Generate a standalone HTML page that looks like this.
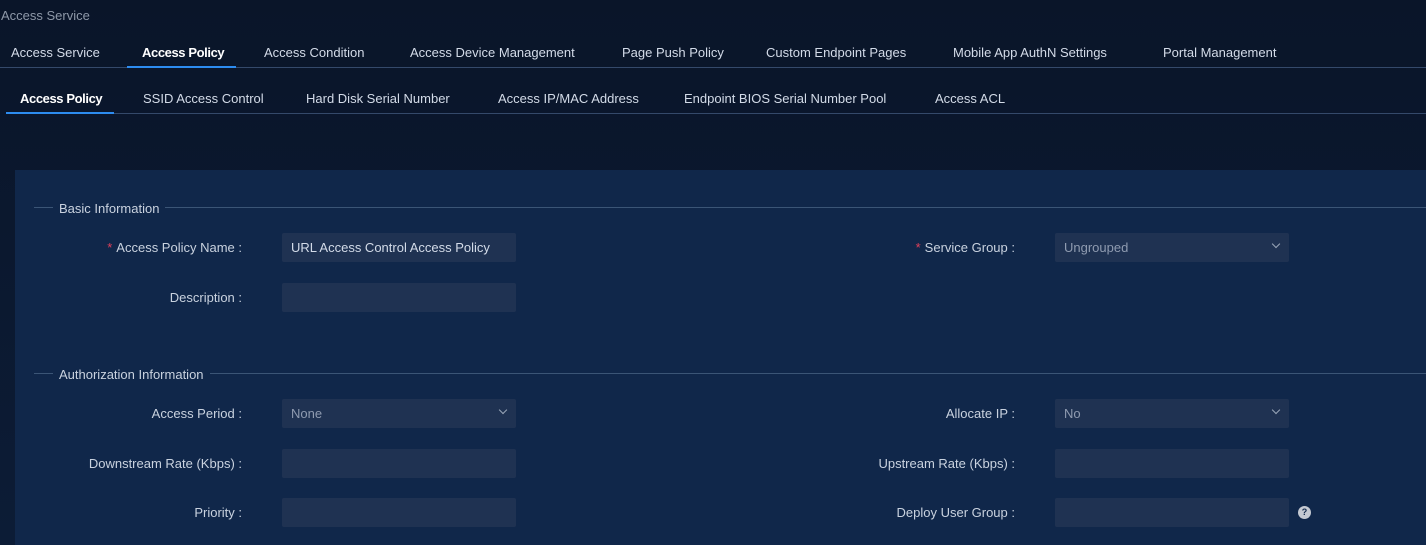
<!DOCTYPE html>
<html><head><style>
body{margin:0;width:1426px;height:545px;overflow:hidden;background:linear-gradient(180deg,#0a1529 0%,#0c1c36 100%);font-family:"Liberation Sans",sans-serif;font-size:13px;color:#d3dbe8;position:relative}
.a{position:absolute;white-space:nowrap}
.t{top:45px}
.s{top:91px}
.panel{position:absolute;left:15px;top:170px;width:1411px;height:375px;background:#10274a}
.in{position:absolute;width:234px;height:29px;background:#1f3252;border-radius:2px;color:#8f9bb0;line-height:29px;padding-left:9px;box-sizing:border-box}
.in.v{color:#d3dbe8}
.lbl{position:absolute;text-align:right;width:240px;color:#c9d2df}
.req{color:#e0405a;margin-right:4px}
.chev{position:absolute;right:10px;top:8px;width:5px;height:5px;border-right:1px solid #9aa6b8;border-bottom:1px solid #9aa6b8;transform:rotate(45deg)}
.sec{position:absolute;left:19px;height:1px;background:#3b5576;width:1392px}
.sect{position:absolute;background:#10274a;padding:0 6px;color:#c9d2df}
</style></head><body>
<div class="a" style="left:1px;top:8px;color:#8e98a8;font-size:13px">Access Service</div>
<div class="a t" style="left:11px">Access Service</div>
<div class="a t" style="left:142px;color:#fff;font-weight:bold;letter-spacing:-0.4px">Access Policy</div>
<div class="a t" style="left:264px">Access Condition</div>
<div class="a t" style="left:410px">Access Device Management</div>
<div class="a t" style="left:622px">Page Push Policy</div>
<div class="a t" style="left:766px">Custom Endpoint Pages</div>
<div class="a t" style="left:953px">Mobile App AuthN Settings</div>
<div class="a t" style="left:1163px">Portal Management</div>
<div class="a" style="left:0;top:67px;width:1426px;height:1px;background:#34496a"></div>
<div class="a" style="left:127px;top:66px;width:109px;height:2px;background:#2d8cf0"></div>
<div class="a s" style="left:20px;color:#fff;font-weight:bold;letter-spacing:-0.4px">Access Policy</div>
<div class="a s" style="left:143px">SSID Access Control</div>
<div class="a s" style="left:306px">Hard Disk Serial Number</div>
<div class="a s" style="left:498px">Access IP/MAC Address</div>
<div class="a s" style="left:684px">Endpoint BIOS Serial Number Pool</div>
<div class="a s" style="left:935px">Access ACL</div>
<div class="a" style="left:6px;top:113px;width:1420px;height:1px;background:#34496a"></div>
<div class="a" style="left:6px;top:112px;width:108px;height:2px;background:#2d8cf0"></div>
<div class="panel"></div>
<div class="sec" style="top:207px;left:34px"></div>
<div class="sect" style="left:53px;top:201px">Basic Information</div>
<div class="sec" style="top:373px;left:34px"></div>
<div class="sect" style="left:53px;top:367px">Authorization Information</div>

<div class="lbl" style="left:2px;top:240px"><span class="req">*</span>Access Policy Name :</div>
<div class="in v" style="left:282px;top:233px">URL Access Control Access Policy</div>
<div class="lbl" style="left:775px;top:240px"><span class="req">*</span>Service Group :</div>
<div class="in" style="left:1055px;top:233px">Ungrouped<span class="chev"></span></div>
<div class="lbl" style="left:2px;top:290px">Description :</div>
<div class="in" style="left:282px;top:283px"></div>

<div class="lbl" style="left:2px;top:406px">Access Period :</div>
<div class="in" style="left:282px;top:399px">None<span class="chev"></span></div>
<div class="lbl" style="left:775px;top:406px">Allocate IP :</div>
<div class="in" style="left:1055px;top:399px">No<span class="chev"></span></div>
<div class="lbl" style="left:2px;top:456px">Downstream Rate (Kbps) :</div>
<div class="in" style="left:282px;top:449px"></div>
<div class="lbl" style="left:775px;top:456px">Upstream Rate (Kbps) :</div>
<div class="in" style="left:1055px;top:449px"></div>
<div class="lbl" style="left:2px;top:505px">Priority :</div>
<div class="in" style="left:282px;top:498px"></div>
<div class="lbl" style="left:775px;top:505px">Deploy User Group :</div>
<div class="in" style="left:1055px;top:498px"></div>
<div class="a" style="left:1298px;top:506px;width:13px;height:13px;border-radius:50%;background:#c4c9d2;color:#10274a;font-size:9px;font-weight:bold;text-align:center;line-height:13px">?</div>
</body></html>
